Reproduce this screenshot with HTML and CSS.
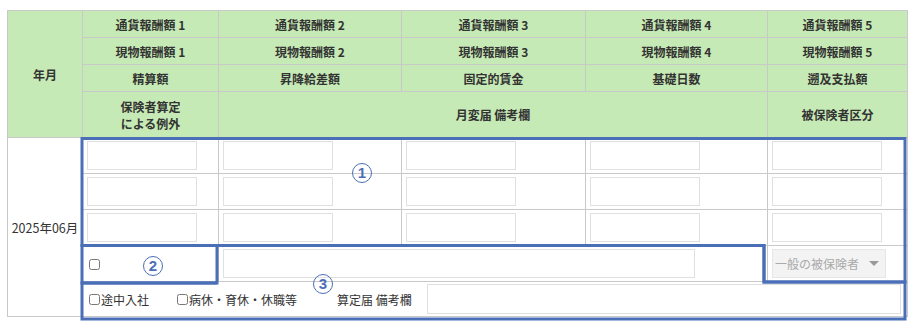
FILE: index.html
```html
<!DOCTYPE html>
<html lang="ja">
<head>
    <meta charset="UTF-8">
    <title>報酬月額</title>
    <link rel="stylesheet" href="styles.css">
</head>
<body>
    <div class="sheet">
        <table class="pay-table">
            <colgroup>
                <col class="c-month">
                <col class="c-1">
                <col class="c-2">
                <col class="c-3">
                <col class="c-4">
                <col class="c-5">
            </colgroup>
            <thead>
                <tr class="h-row">
                    <th rowspan="4">年月</th>
                    <th>通貨報酬額 1</th>
                    <th>通貨報酬額 2</th>
                    <th>通貨報酬額 3</th>
                    <th>通貨報酬額 4</th>
                    <th>通貨報酬額 5</th>
                </tr>
                <tr class="h-row">
                    <th>現物報酬額 1</th>
                    <th>現物報酬額 2</th>
                    <th>現物報酬額 3</th>
                    <th>現物報酬額 4</th>
                    <th>現物報酬額 5</th>
                </tr>
                <tr class="h-row">
                    <th>精算額</th>
                    <th>昇降給差額</th>
                    <th>固定的賃金</th>
                    <th>基礎日数</th>
                    <th>遡及支払額</th>
                </tr>
                <tr class="h-tall">
                    <th>保険者算定<br>による例外</th>
                    <th colspan="3">月変届 備考欄</th>
                    <th>被保険者区分</th>
                </tr>
            </thead>
            <tbody>
                <tr class="b-row">
                    <td rowspan="5" class="month">2025年06月</td>
                    <td><input type="text" class="num"></td>
                    <td><input type="text" class="num"></td>
                    <td><input type="text" class="num"></td>
                    <td><input type="text" class="num"></td>
                    <td><input type="text" class="num"></td>
                </tr>
                <tr class="b-row">
                    <td><input type="text" class="num"></td>
                    <td><input type="text" class="num"></td>
                    <td><input type="text" class="num"></td>
                    <td><input type="text" class="num"></td>
                    <td><input type="text" class="num"></td>
                </tr>
                <tr class="b-row">
                    <td><input type="text" class="num"></td>
                    <td><input type="text" class="num"></td>
                    <td><input type="text" class="num"></td>
                    <td><input type="text" class="num"></td>
                    <td><input type="text" class="num"></td>
                </tr>
                <tr class="b-row">
                    <td><input type="checkbox" class="chk"></td>
                    <td colspan="3"><input type="text" class="memo"></td>
                    <td>
                        <div class="select is-disabled">
                            <span>一般の被保険者</span>
                            <span class="caret"></span>
                        </div>
                    </td>
                </tr>
                <tr class="b-last">
                    <td colspan="5">
                        <div class="opts">
                            <label class="opt"><input type="checkbox" class="chk">途中入社</label>
                            <label class="opt"><input type="checkbox" class="chk">病休・育休・休職等</label>
                            <span class="memo-label">算定届 備考欄</span>
                            <input type="text" class="memo-wide">
                        </div>
                    </td>
                </tr>
            </tbody>
        </table>

        <!-- annotation overlay -->
        <svg class="marks" width="921" height="329" viewBox="0 0 921 329">
            <path d="M82 138.5 H905 V282 H764 V245.5 H82 Z"/>
            <path d="M82 245.5 H217 V283 H82 Z"/>
            <path d="M217 245.5 H764 V282 H905 V319 H82 V283 H217"/>
        </svg>
        <span class="badge b1">1</span>
        <span class="badge b2">2</span>
        <span class="badge b3">3</span>
    </div>
</body>
</html>
```

FILE: styles.css
```css
* {
    box-sizing: border-box;
}

body {
    margin: 0;
    background: #fff;
    font-family: "Noto Sans CJK JP", "Noto Sans", sans-serif;
    font-size: 12px;
    color: #333;
}

.sheet {
    position: relative;
    width: 921px;
    height: 329px;
    padding: 10px 0 0 7px;
}

.pay-table {
    width: 900px;
    border-collapse: collapse;
    table-layout: fixed;
}

.c-month { width: 75px; }
.c-1 { width: 136px; }
.c-2 { width: 183px; }
.c-3 { width: 184px; }
.c-4 { width: 182px; }
.c-5 { width: 140px; }

.pay-table th,
.pay-table td {
    border: 1px solid #c9c9c9;
    padding: 0;
}

.pay-table th {
    background: #c6eab5;
    font-weight: bold;
    color: #333;
    text-align: center;
    line-height: 17px;
}

.h-row { height: 27px; }
.h-tall { height: 46px; }

.pay-table td {
    padding: 0 4px;
    vertical-align: middle;
}

.b-row { height: 36px; }
.b-last { height: 35px; }

.pay-table td.month {
    padding: 0 1px;
    text-align: center;
    white-space: nowrap;
    font-size: 12.5px;
}

input.num {
    display: block;
    width: 110px;
    height: 29px;
    border: 1px solid #e0e0e0;
    background: #fff;
}

input.memo {
    display: block;
    width: 472px;
    height: 29px;
    border: 1px solid #e0e0e0;
}

.chk {
    width: 11px;
    height: 11px;
    margin: 0 1px 0 2px;
    vertical-align: -1px;
}

.select {
    display: flex;
    align-items: center;
    justify-content: space-between;
    width: 114px;
    height: 29px;
    padding: 0 6px 0 2px;
    background: #f3f3f3;
    border: 1px solid #e6e6e6;
    color: #aaa;
    font-size: 12px;
    white-space: nowrap;
}

.caret {
    width: 0;
    height: 0;
    border-left: 5px solid transparent;
    border-right: 5px solid transparent;
    border-top: 5px solid #999;
}

.opts {
    display: flex;
    align-items: center;
    padding-right: 2px;
}

.opt {
    display: flex;
    align-items: center;
    margin-right: 26px;
}

.memo-label {
    margin: 0 15px 0 14px;
    white-space: nowrap;
}

.memo-wide {
    flex: 1;
    min-width: 0;
    height: 30px;
    border: 1px solid #e0e0e0;
}

.marks {
    position: absolute;
    top: 0;
    left: 0;
    pointer-events: none;
}

.marks path {
    fill: none;
    stroke: #4a6fb7;
    stroke-width: 3;
}

.badge {
    position: absolute;
    width: 20px;
    height: 20px;
    border: 1.5px solid #4a6fb7;
    border-radius: 50%;
    color: #4a6fb7;
    font-family: "Liberation Sans", sans-serif;
    font-weight: bold;
    font-size: 15px;
    line-height: 17px;
    text-align: center;
}

.b1 { left: 352px; top: 163px; }
.b2 { left: 143px; top: 256px; }
.b3 { left: 313px; top: 274px; }
```
